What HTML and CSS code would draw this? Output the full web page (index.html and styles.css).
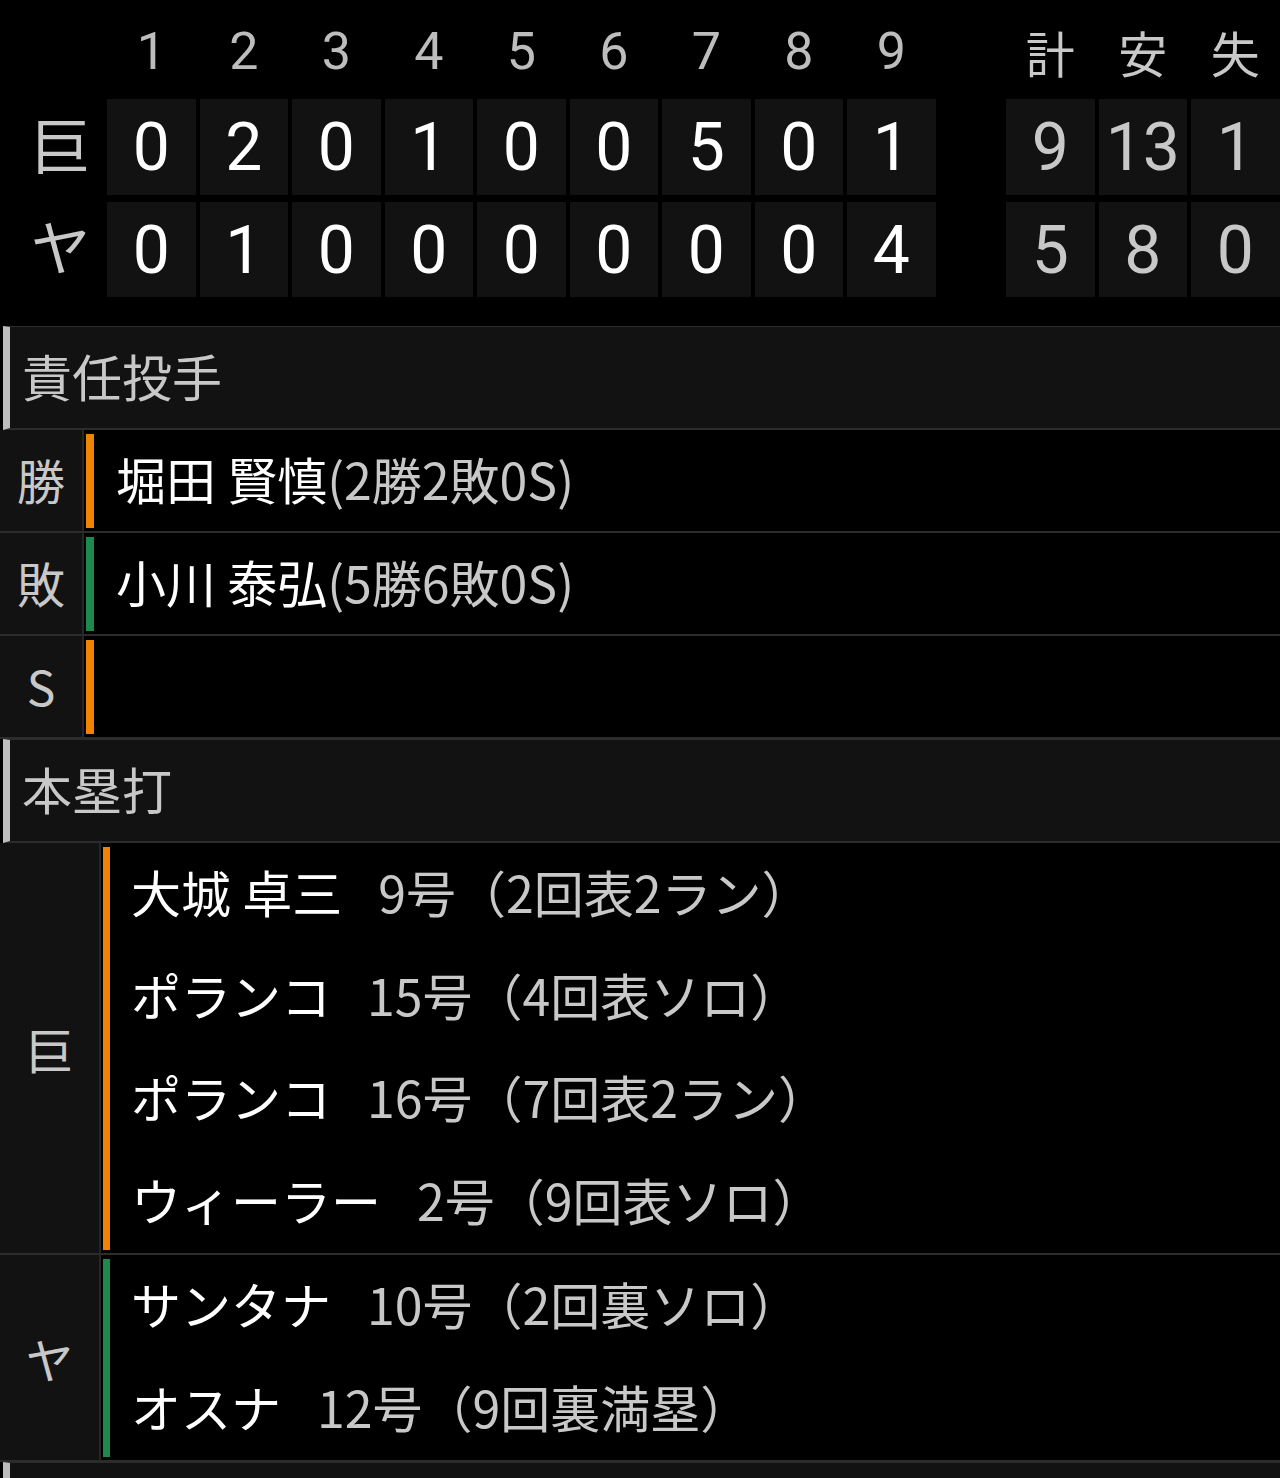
FILE: index.html
```html
<!DOCTYPE html>
<html lang="ja">
<head>
<meta charset="utf-8">
<title>試合結果</title>
<link rel="stylesheet" href="styles.css">
</head>
<body>
<div class="board">
  <div class="sb-row sb-head">
    <div class="team"></div>
    <div class="hcell">1</div><div class="hcell">2</div><div class="hcell">3</div>
    <div class="hcell">4</div><div class="hcell">5</div><div class="hcell">6</div>
    <div class="hcell">7</div><div class="hcell">8</div><div class="hcell">9</div>
    <div class="spacer"></div>
    <div class="hcell jp">計</div><div class="hcell jp">安</div><div class="hcell jp">失</div>
  </div>
  <div class="sb-row sb-score">
    <div class="team">巨</div>
    <div class="cell">0</div><div class="cell">2</div><div class="cell">0</div>
    <div class="cell">1</div><div class="cell">0</div><div class="cell">0</div>
    <div class="cell">5</div><div class="cell">0</div><div class="cell">1</div>
    <div class="spacer"></div>
    <div class="cell tot">9</div><div class="cell tot">13</div><div class="cell tot">1</div>
  </div>
  <div class="sb-row sb-score">
    <div class="team">ヤ</div>
    <div class="cell">0</div><div class="cell">1</div><div class="cell">0</div>
    <div class="cell">0</div><div class="cell">0</div><div class="cell">0</div>
    <div class="cell">0</div><div class="cell">0</div><div class="cell">4</div>
    <div class="spacer"></div>
    <div class="cell tot">5</div><div class="cell tot">8</div><div class="cell tot">0</div>
  </div>
</div>

<div class="sec-head">責任投手</div>
<div class="p-row">
  <div class="p-label">勝</div>
  <div class="bar orange"></div>
  <div class="p-text"><span class="nm">堀田 賢慎</span><span class="dt">(2勝2敗0S)</span></div>
</div>
<div class="p-row">
  <div class="p-label">敗</div>
  <div class="bar green"></div>
  <div class="p-text"><span class="nm">小川 泰弘</span><span class="dt">(5勝6敗0S)</span></div>
</div>
<div class="p-row">
  <div class="p-label">S</div>
  <div class="bar orange"></div>
  <div class="p-text"></div>
</div>

<div class="sec-head">本塁打</div>
<div class="hr-block">
  <div class="hr-label">巨</div>
  <div class="bar orange"></div>
  <div class="hr-lines">
    <div class="hr-line"><span class="nm">大城 卓三</span><span class="dt gapl">9号（2回表2ラン）</span></div>
    <div class="hr-line"><span class="nm">ポランコ</span><span class="dt gapl">15号（4回表ソロ）</span></div>
    <div class="hr-line"><span class="nm">ポランコ</span><span class="dt gapl">16号（7回表2ラン）</span></div>
    <div class="hr-line"><span class="nm">ウィーラー</span><span class="dt gapl">2号（9回表ソロ）</span></div>
  </div>
</div>
<div class="hr-block">
  <div class="hr-label">ヤ</div>
  <div class="bar green"></div>
  <div class="hr-lines">
    <div class="hr-line"><span class="nm">サンタナ</span><span class="dt gapl">10号（2回裏ソロ）</span></div>
    <div class="hr-line"><span class="nm">オスナ</span><span class="dt gapl">12号（9回裏満塁）</span></div>
  </div>
</div>
<div class="sec-head"></div>
</body>
</html>
```

FILE: styles.css
```css
html, body {
  margin: 0;
  padding: 0;
  background: #000;
}
body {
  font-family: "Noto Sans CJK JP", "Noto Sans", sans-serif;
  color: #c8c8c8;
  overflow: hidden;
}

/* scoreboard */
.board {
  padding-bottom: 29px;
}
.sb-row {
  display: grid;
  grid-template-columns: 103px repeat(9, 88.5px) 62.5px repeat(3, 88.5px);
  column-gap: 4px;
}
.sb-head {
  height: 99px;
}
.sb-score {
  height: 95.5px;
}
.sb-score + .sb-score {
  margin-top: 7px;
}
.team {
  display: flex;
  align-items: center;
  justify-content: center;
  padding-left: 18px;
  padding-bottom: 8px;
  font-family: "Noto Sans CJK JP", sans-serif;
  font-size: 60px;
  color: #c8c8c8;
  line-height: 1;
}
.hcell {
  display: flex;
  align-items: center;
  justify-content: center;
  padding-top: 4px;
  font-family: Roboto, "Noto Sans CJK JP", sans-serif;
  font-size: 52px;
  color: #bdbdbd;
  line-height: 1;
}
.hcell.jp {
  font-family: "Noto Sans CJK JP", sans-serif;
  font-size: 49px;
  color: #c8c8c8;
}
.cell {
  display: flex;
  align-items: center;
  justify-content: center;
  padding-top: 3px;
  background: #121212;
  font-family: Roboto, sans-serif;
  font-size: 66px;
  color: #fff;
  line-height: 1;
}
.cell.tot {
  color: #c8c8c8;
}

/* section header */
.sec-head {
  margin-left: 3px;
  height: 96px;
  box-sizing: content-box;
  border-left: 7px solid #bdbdbd;
  border-top: 1px solid #2c2c2c;
  border-bottom: 2px solid #2c2c2c;
  background: #121212;
  padding-left: 12px;
  padding-bottom: 5px;
  display: flex;
  align-items: center;
  font-size: 50px;
  line-height: 1;
  color: #c8c8c8;
}

/* pitcher rows */
.p-row {
  display: flex;
  height: 101px;
  border-bottom: 2px solid #2c2c2c;
}
.p-label {
  width: 84px;
  flex: none;
  background: #121212;
  border-right: 2px solid #262626;
  display: flex;
  align-items: center;
  justify-content: center;
  padding-bottom: 4px;
  box-sizing: border-box;
  font-size: 48px;
  line-height: 1;
  color: #c8c8c8;
}
.bar {
  flex: none;
  width: 8px;
  margin: 4px 0 3px 2px;
}
.orange { background: #f08300; }
.green { background: #1c8a4c; }
.p-text {
  display: flex;
  align-items: center;
  padding-left: 22px;
  padding-bottom: 6px;
  font-size: 50px;
  line-height: 1;
}
.nm {
  color: #fff;
}
.dt {
  color: #c8c8c8;
}

/* home runs */
.hr-block {
  display: flex;
  border-bottom: 2px solid #2c2c2c;
}
.hr-label {
  width: 99px;
  flex: none;
  background: #121212;
  border-right: 2px solid #262626;
  display: flex;
  align-items: center;
  justify-content: center;
  font-size: 48px;
  line-height: 1;
  color: #c8c8c8;
}
.hr-block .bar {
  margin-left: 2px;
  width: 7px;
}
.hr-lines {
  padding-left: 21px;
}
.hr-line {
  height: 102.5px;
  display: flex;
  align-items: center;
  padding-bottom: 6px;
  box-sizing: border-box;
  font-size: 50px;
  line-height: 1;
  white-space: nowrap;
}
.gapl {
  margin-left: 36px;
}
```
